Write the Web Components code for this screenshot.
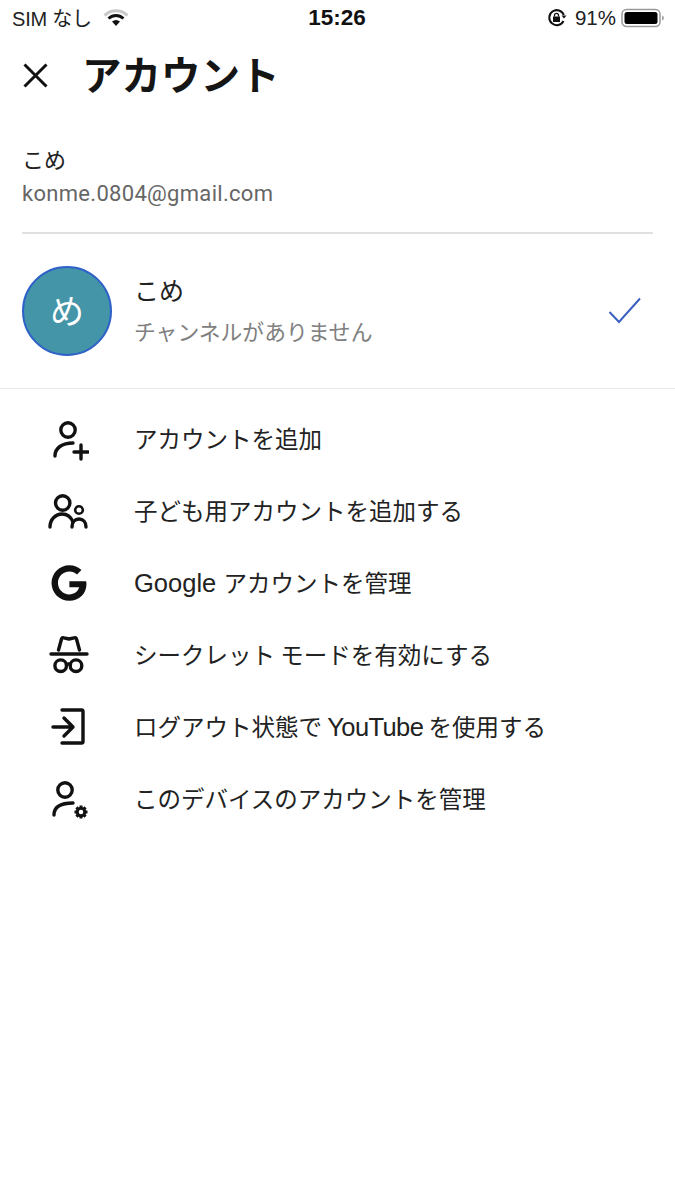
<!DOCTYPE html>
<html lang="ja">
<head>
<meta charset="utf-8">
<title>アカウント</title>
<style>
  html, body { margin: 0; background: #fff; }
  body { width: 675px; height: 1200px; overflow: hidden; color: #111; font-family: "Noto Sans CJK JP", "Noto Sans", sans-serif; }
</style>
</head>
<body>
<status-bar></status-bar>
<app-header>アカウント</app-header>
<account-summary name="こめ" email="konme.0804@gmail.com"></account-summary>
<channel-row initial="め" name="こめ" sub="チャンネルがありません"></channel-row>
<account-menu>
  <menu-item icon="add">アカウントを追加</menu-item>
  <menu-item icon="kid">子ども用アカウントを追加する</menu-item>
  <menu-item icon="google"><span class="latin wide">Google</span> アカウントを管理</menu-item>
  <menu-item icon="incognito">シークレット モードを有効にする</menu-item>
  <menu-item icon="signout">ログアウト状態で <span class="latin tight">YouTube</span> を使用する</menu-item>
  <menu-item icon="manage">このデバイスのアカウントを管理</menu-item>
</account-menu>
<script>
class StatusBar extends HTMLElement {
  constructor() {
    super();
    this.attachShadow({ mode: "open" });
    this.shadowRoot.innerHTML = `
      <style>
        :host { display: grid; grid-template-columns: 1fr auto 1fr; align-items: center; height: 35px; padding: 0 10px 2px 12px;
                font-family: "Liberation Sans", "Noto Sans CJK JP", sans-serif; font-size: 20px; color: #222; }
        .left, .right { display: flex; align-items: center; }
        .left { gap: 11px; }
        .sim { letter-spacing: -.2px; }
        .right { justify-content: flex-end; }
        .time { font-size: 22.500px; font-weight: 700; color: #111; margin-right: 3px; }
        .pct { margin: 0 5px 0 8px; font-size: 20.500px; }
        svg { display: block; }
      </style>
      <div class="left">
        <span class="sim">SIM なし</span>
        <svg width="26" height="20" viewBox="0 0 26 20">
          <path d="M1.500 7.500C8 1 18 1 24.500 7.500" fill="none" stroke="#c8c8c8" stroke-width="3"/>
          <path d="M5.500 10.500C10 6.500 16 6.500 20.500 10.500" fill="none" stroke="#111" stroke-width="3"/>
          <path d="M9 13.500C11.500 11.500 14.500 11.500 17 13.500L13 18Z" fill="#111"/>
        </svg>
      </div>
      <div class="time">15:26</div>
      <div class="right">
        <svg width="20" height="20" viewBox="0 0 20 20">
          <path d="M16.500 13A7.500 7.500 0 1 1 16.800 7" fill="none" stroke="#111" stroke-width="2"/>
          <path d="M14.500 7.500h5l-2.500 3z" fill="#111"/>
          <rect x="6" y="8.500" width="7" height="5.500" fill="#111"/>
          <path d="M7.500 8.500V7.300a2 2 0 0 1 4 0v1.200" fill="none" stroke="#111" stroke-width="1.300"/>
        </svg>
        <span class="pct">91%</span>
        <svg width="44" height="20" viewBox="0 0 44 20">
          <rect x="1" y="1.500" width="38" height="17" rx="4.500" fill="none" stroke="#9a9a9a" stroke-width="1.500"/>
          <rect x="3.500" y="4" width="33" height="12" rx="2.500" fill="#000"/>
          <path d="M41 7.500c1.500.4 2 1.300 2 2.500s-.5 2.100-2 2.500z" fill="#aaa"/>
        </svg>
      </div>`;
  }
}

class AppHeader extends HTMLElement {
  constructor() {
    super();
    this.attachShadow({ mode: "open" });
    this.shadowRoot.innerHTML = `
      <style>
        :host { display: flex; align-items: center; height: 76px; padding-left: 22px; }
        svg { display: block; flex: none; margin-right: 33px; }
        h1 { margin: 0 0 4px; font-size: 39.500px; line-height: 72px; font-weight: 700; color: #151515; }
      </style>
      <svg width="27" height="27" viewBox="0 0 27 27">
        <path d="M2.500 2.500l22 22M24.500 2.500l-22 22" fill="none" stroke="#111" stroke-width="3"/>
      </svg>
      <h1><slot></slot></h1>`;
  }
}

class AccountSummary extends HTMLElement {
  constructor() {
    super();
    this.attachShadow({ mode: "open" });
  }
  connectedCallback() {
    this.shadowRoot.innerHTML = `
      <style>
        :host { display: block; margin: 0 22px; height: 121px; box-sizing: border-box; padding-top: 27px; border-bottom: 2px solid #e0e0e0; }
        .name { font-size: 22px; line-height: 37px; color: #222; }
        .email { font-family: Roboto, sans-serif; font-size: 22px; line-height: 34px; color: #666; letter-spacing: .3px; }
      </style>
      <div class="name">${this.getAttribute("name")}</div>
      <div class="email">${this.getAttribute("email")}</div>`;
  }
}

class ChannelRow extends HTMLElement {
  constructor() {
    super();
    this.attachShadow({ mode: "open" });
  }
  connectedCallback() {
    this.shadowRoot.innerHTML = `
      <style>
        :host { display: flex; align-items: center; height: 155px; box-sizing: border-box; padding: 0 33px 0 22px; border-bottom: 1px solid #e8e8e8; }
        .avatar { flex: none; width: 90px; height: 90px; box-sizing: border-box; border-radius: 50%; background: #4595a8; border: 2px solid #2f62c8; padding-bottom: 2px;
                  display: flex; align-items: center; justify-content: center; color: #fff; font-size: 34px; line-height: 1; }
        .text { flex: 1; margin-left: 22px; }
        .name { font-size: 25px; line-height: 40px; color: #222; }
        .sub { font-size: 21.800px; line-height: 44px; color: #808080; }
        svg { display: block; flex: none; }
      </style>
      <div class="avatar">${this.getAttribute("initial")}</div>
      <div class="text">
        <div class="name">${this.getAttribute("name")}</div>
        <div class="sub">${this.getAttribute("sub")}</div>
      </div>
      <svg width="34" height="28" viewBox="0 0 34 28">
        <path d="M1.500 15l9.500 10L32 1.500" fill="none" stroke="#3a5fc0" stroke-width="2"/>
      </svg>`;
  }
}

class AccountMenu extends HTMLElement {
  constructor() {
    super();
    this.attachShadow({ mode: "open" });
    this.shadowRoot.innerHTML = `
      <style>:host { display: block; padding-top: 14px; }</style>
      <slot></slot>`;
  }
}

const ICONS = {
  add: `<circle cx="21" cy="15" r="7.200"/><path d="M8 41C8 33 15 28 26 28"/><path d="M27 37h14M34 30v14"/>`,
  kid: `<circle cx="15.700" cy="16" r="7.200"/><path d="M3 40C3 32 9 27 15 27C20 27 24 30 26 35"/><circle cx="32" cy="23" r="3.800" stroke-width="2.600"/><path d="M25 40c0-5 3-8 7-8s7 3 7 8"/>`,
  google: `<path transform="translate(22 24) scale(.95) translate(-20.600 -24)" d="M38.500 22.200H21v6.400h10.300c-1.300 4.600-5.300 7.400-10.300 7.400-6.700 0-12-5.300-12-12S14.300 12 21 12c3.100 0 5.900 1.100 8 3l4.700-4.700C30.300 7.200 26 5.200 21 5.200 10.600 5.200 2.200 13.600 2.200 24S10.600 42.800 21 42.800c10.200 0 18-7.300 18-18 0-.9-.2-1.800-.5-2.600z" fill="#111" stroke="none"/>`,
  incognito: `<path d="M11.500 19L14.500 8c.3-1.200 1.200-1.600 2.400-1.200L22 8l5.100-1.200c1.200-.4 2.100 0 2.400 1.200L32.500 19"/><path d="M4 23H40"/><circle cx="13.700" cy="34.700" r="5.800"/><circle cx="29" cy="34.700" r="5.800"/><path d="M19.500 33.500c1.500-.8 3-.8 4 0"/>`,
  signout: `<path d="M15 7H34.500a1.500 1.500 0 0 1 1.500 1.500v30a1.500 1.500 0 0 1-1.500 1.500H15"/><path d="M6 24H26M17 15l9 9-9 9"/>`,
  manage: `<circle cx="18" cy="15" r="7.200"/><path d="M7 40C7 32 14 28 26 28"/><circle cx="34" cy="37" r="3.800" stroke-width="3"/><path d="M34 30.500v2M34 41.500v2M27.500 37h2M38.500 37h2M29.400 32.400l1.400 1.400M37.200 40.200l1.400 1.400M38.600 32.400l-1.400 1.400M30.800 40.200l-1.400 1.400" stroke-width="3" stroke-linecap="butt"/>`,
};

class MenuItem extends HTMLElement {
  constructor() {
    super();
    this.attachShadow({ mode: "open" });
  }
  connectedCallback() {
    this.shadowRoot.innerHTML = `
      <style>
        :host { display: flex; align-items: center; height: 72px; padding-left: 47px; }
        svg { display: block; flex: none; margin-right: 45px; fill: none; stroke: #111; stroke-width: 3.400; stroke-linecap: round; stroke-linejoin: round; }
        span { font-size: 23.500px; color: #222; white-space: nowrap; margin-bottom: 2px; }
        ::slotted(.latin) { font-family: "Liberation Sans", sans-serif; font-size: 25.500px; }
        ::slotted(.wide) { margin-right: 2px; }
        ::slotted(.tight) { letter-spacing: -.6px; }
      </style>
      <svg width="42" height="48" viewBox="0 0 42 48">${ICONS[this.getAttribute("icon")]}</svg>
      <span><slot></slot></span>`;
  }
}

customElements.define("status-bar", StatusBar);
customElements.define("app-header", AppHeader);
customElements.define("account-summary", AccountSummary);
customElements.define("channel-row", ChannelRow);
customElements.define("account-menu", AccountMenu);
customElements.define("menu-item", MenuItem);
</script>
</body>
</html>
